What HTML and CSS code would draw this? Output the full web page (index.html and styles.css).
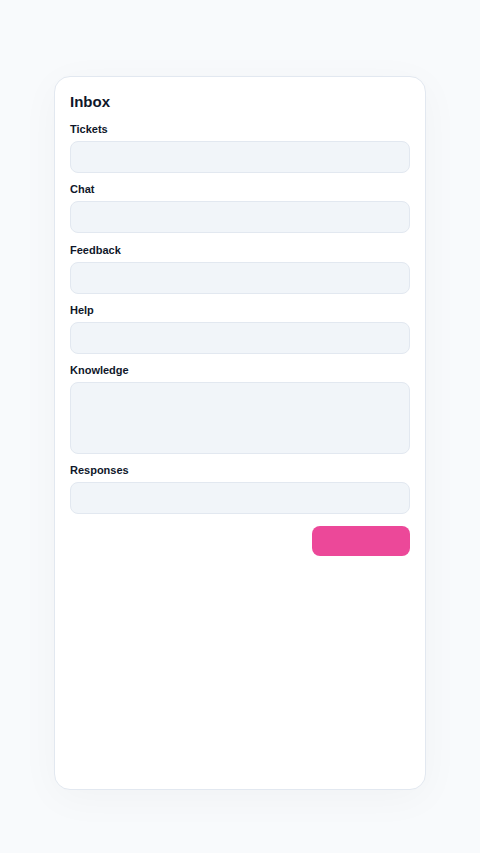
FILE: index.html
```html
<!DOCTYPE html>
<html lang="en">
<head>
<meta charset="utf-8">
<title>Inbox</title>
<link rel="stylesheet" href="styles.css">
</head>
<body>
<main class="page">
  <section class="card">
    <h1 class="title">Inbox</h1>
    <form class="form">
      <label class="field"><span class="label">Tickets</span><input class="input" type="text"></label>
      <label class="field"><span class="label">Chat</span><input class="input" type="text"></label>
      <label class="field"><span class="label">Feedback</span><input class="input" type="text"></label>
      <label class="field"><span class="label">Help</span><input class="input" type="text"></label>
      <label class="field"><span class="label">Knowledge</span><textarea class="input textarea"></textarea></label>
      <label class="field"><span class="label">Responses</span><input class="input" type="text"></label>
      <div class="actions"><button class="button" type="button"></button></div>
    </form>
  </section>
</main>
</body>
</html>
```
FILE: styles.css
```css
* { box-sizing: border-box; }
html, body { margin: 0; height: 100%; }
body {
  background: #f8fafc;
  font-family: "Liberation Sans", Arial, sans-serif;
  color: #0f172a;
}
.page {
  padding: 76px 54px 63px;
  height: 853px;
}
.card {
  height: 714px;
  background: #ffffff;
  border: 1px solid #e2e8f0;
  border-radius: 16px;
  padding: 15px 15px;
  box-shadow: 0 8px 40px rgba(15, 23, 42, 0.035);
}
.title {
  margin: 0 0 9px;
  font-size: 15px;
  line-height: 20px;
  font-weight: 700;
}
.form {
  display: flex;
  flex-direction: column;
  gap: 8.25px;
}
.field {
  display: flex;
  flex-direction: column;
  gap: 4px;
}
.label {
  font-size: 11px;
  line-height: 16px;
  font-weight: 700;
}
.input {
  display: block;
  width: 100%;
  height: 32px;
  margin: 0;
  background: #f1f5f9;
  border: 1px solid #e2e8f0;
  border-radius: 8px;
  font: inherit;
  outline: none;
}
.textarea {
  height: 72px;
  resize: none;
}
.actions {
  display: flex;
  justify-content: flex-end;
  padding-top: 3px;
}
.button {
  width: 98px;
  height: 30px;
  background: #ec4899;
  border: none;
  border-radius: 8px;
}
```
